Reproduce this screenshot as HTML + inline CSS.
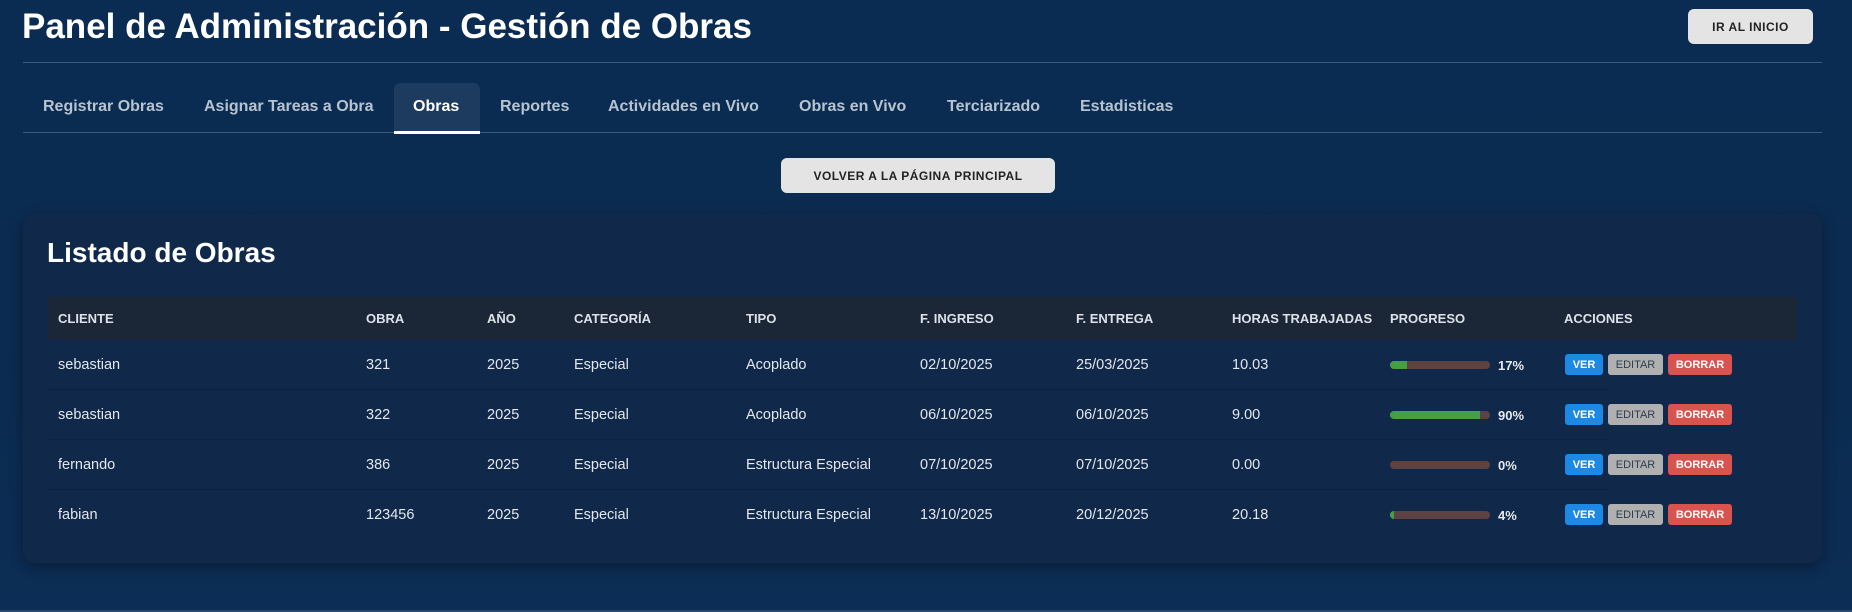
<!DOCTYPE html>
<html><head><meta charset="utf-8"><style>
*{box-sizing:border-box;margin:0;padding:0}
body{width:1852px;height:612px;overflow:hidden;font-family:"Liberation Sans",Arial,sans-serif;background:linear-gradient(180deg,#0b2c52 0%,#0b2b50 60%,#0c2d55 100%);color:#e6e9ee;position:relative}
.abs{position:absolute}
h1{position:absolute;left:22px;top:6px;font-size:35px;font-weight:bold;color:#fff;line-height:42px;white-space:nowrap}
.hline{position:absolute;left:23px;width:1799px;height:1px;background:#3f5a7a}
.btn{position:absolute;background:#e4e4e4;color:#222;font-weight:bold;font-size:12px;letter-spacing:.5px;border-radius:6px;display:flex;align-items:center;justify-content:center}
.tab{position:absolute;top:83px;height:50px;line-height:48px;font-size:16px;font-weight:bold;color:#b8c3d0;white-space:nowrap}
.card{position:absolute;left:23px;top:214px;width:1799px;height:349px;background:#10294a;border-radius:12px;box-shadow:0 4px 14px rgba(0,0,0,.35)}
.th{position:absolute;top:297px;height:43px;left:48px;width:1749px;background:#1b2636}
.c{position:absolute;font-size:14.5px;color:#e3e7ec;white-space:nowrap;line-height:16px}
.h{font-size:13px;font-weight:bold;color:#dde2e8}
.rb{position:absolute;left:48px;width:1562px;height:1px;background:#0d223c}
.bar{position:absolute;left:1390px;width:100px;height:8px;border-radius:4px;background:#5e4242;overflow:hidden}
.bar i{display:block;height:100%;background:#43a047}
.pct{position:absolute;left:1498px;font-size:13px;font-weight:bold;color:#e6e9ee}
.b{position:absolute;height:21px;border-radius:3px;font-size:11px;font-weight:bold;display:flex;align-items:center;justify-content:center}
.ver{left:1565px;width:38px;background:#1e88e5;color:#fff}
.ed{left:1608px;width:55px;background:#b0b0b0;color:#2c3e50;font-weight:normal}
.bo{left:1668px;width:64px;background:#d9534f;color:#fff}
</style></head><body>
<h1>Panel de Administración - Gestión de Obras</h1>
<div class="btn" style="left:1688px;top:9px;width:125px;height:35px">IR AL INICIO</div>
<div class="hline" style="top:62px"></div>
<div class="abs" style="left:394px;top:83px;width:86px;height:50px;background:#1d3a5f;border-radius:6px 6px 0 0"></div>
<div class="hline" style="top:132px"></div>
<div class="abs" style="left:394px;top:131px;width:86px;height:3px;background:#fff"></div>
<div class="tab" style="left:43px">Registrar Obras</div>
<div class="tab" style="left:204px">Asignar Tareas a Obra</div>
<div class="tab" style="left:413px;color:#fff">Obras</div>
<div class="tab" style="left:500px">Reportes</div>
<div class="tab" style="left:608px">Actividades en Vivo</div>
<div class="tab" style="left:799px">Obras en Vivo</div>
<div class="tab" style="left:947px">Terciarizado</div>
<div class="tab" style="left:1080px">Estadisticas</div>
<div class="btn" style="left:781px;top:158px;width:274px;height:35px">VOLVER A LA PÁGINA PRINCIPAL</div>
<div class="card"></div>
<div class="abs" style="left:47px;top:237px;font-size:28px;font-weight:bold;color:#fff">Listado de Obras</div>
<div class="th"></div>
<div class="c h" style="top:311px;left:58px">CLIENTE</div>
<div class="c h" style="top:311px;left:366px">OBRA</div>
<div class="c h" style="top:311px;left:487px">AÑO</div>
<div class="c h" style="top:311px;left:574px">CATEGORÍA</div>
<div class="c h" style="top:311px;left:746px">TIPO</div>
<div class="c h" style="top:311px;left:920px">F. INGRESO</div>
<div class="c h" style="top:311px;left:1076px">F. ENTREGA</div>
<div class="c h" style="top:311px;left:1232px">HORAS TRABAJADAS</div>
<div class="c h" style="top:311px;left:1390px">PROGRESO</div>
<div class="c h" style="top:311px;left:1564px">ACCIONES</div>

<div class="rb" style="top:389px"></div><div class="rb" style="top:439px"></div><div class="rb" style="top:489px"></div>

<div class="c" style="top:357px;left:58px">sebastian</div><div class="c" style="top:357px;left:366px">321</div><div class="c" style="top:357px;left:487px">2025</div><div class="c" style="top:357px;left:574px">Especial</div><div class="c" style="top:357px;left:746px">Acoplado</div><div class="c" style="top:357px;left:920px">02/10/2025</div><div class="c" style="top:357px;left:1076px">25/03/2025</div><div class="c" style="top:357px;left:1232px">10.03</div>
<div class="bar" style="top:361px"><i style="width:17%"></i></div><div class="pct" style="top:358px">17%</div>
<div class="b ver" style="top:354px">VER</div><div class="b ed" style="top:354px">EDITAR</div><div class="b bo" style="top:354px">BORRAR</div>

<div class="c" style="top:407px;left:58px">sebastian</div><div class="c" style="top:407px;left:366px">322</div><div class="c" style="top:407px;left:487px">2025</div><div class="c" style="top:407px;left:574px">Especial</div><div class="c" style="top:407px;left:746px">Acoplado</div><div class="c" style="top:407px;left:920px">06/10/2025</div><div class="c" style="top:407px;left:1076px">06/10/2025</div><div class="c" style="top:407px;left:1232px">9.00</div>
<div class="bar" style="top:411px"><i style="width:90%"></i></div><div class="pct" style="top:408px">90%</div>
<div class="b ver" style="top:404px">VER</div><div class="b ed" style="top:404px">EDITAR</div><div class="b bo" style="top:404px">BORRAR</div>

<div class="c" style="top:457px;left:58px">fernando</div><div class="c" style="top:457px;left:366px">386</div><div class="c" style="top:457px;left:487px">2025</div><div class="c" style="top:457px;left:574px">Especial</div><div class="c" style="top:457px;left:746px">Estructura Especial</div><div class="c" style="top:457px;left:920px">07/10/2025</div><div class="c" style="top:457px;left:1076px">07/10/2025</div><div class="c" style="top:457px;left:1232px">0.00</div>
<div class="bar" style="top:461px"><i style="width:0%"></i></div><div class="pct" style="top:458px">0%</div>
<div class="b ver" style="top:454px">VER</div><div class="b ed" style="top:454px">EDITAR</div><div class="b bo" style="top:454px">BORRAR</div>

<div class="c" style="top:507px;left:58px">fabian</div><div class="c" style="top:507px;left:366px">123456</div><div class="c" style="top:507px;left:487px">2025</div><div class="c" style="top:507px;left:574px">Especial</div><div class="c" style="top:507px;left:746px">Estructura Especial</div><div class="c" style="top:507px;left:920px">13/10/2025</div><div class="c" style="top:507px;left:1076px">20/12/2025</div><div class="c" style="top:507px;left:1232px">20.18</div>
<div class="bar" style="top:511px"><i style="width:4%"></i></div><div class="pct" style="top:508px">4%</div>
<div class="b ver" style="top:504px">VER</div><div class="b ed" style="top:504px">EDITAR</div><div class="b bo" style="top:504px">BORRAR</div>

<div class="abs" style="left:0;top:610px;width:1852px;height:2px;background:#2a4668"></div>
</body></html>
